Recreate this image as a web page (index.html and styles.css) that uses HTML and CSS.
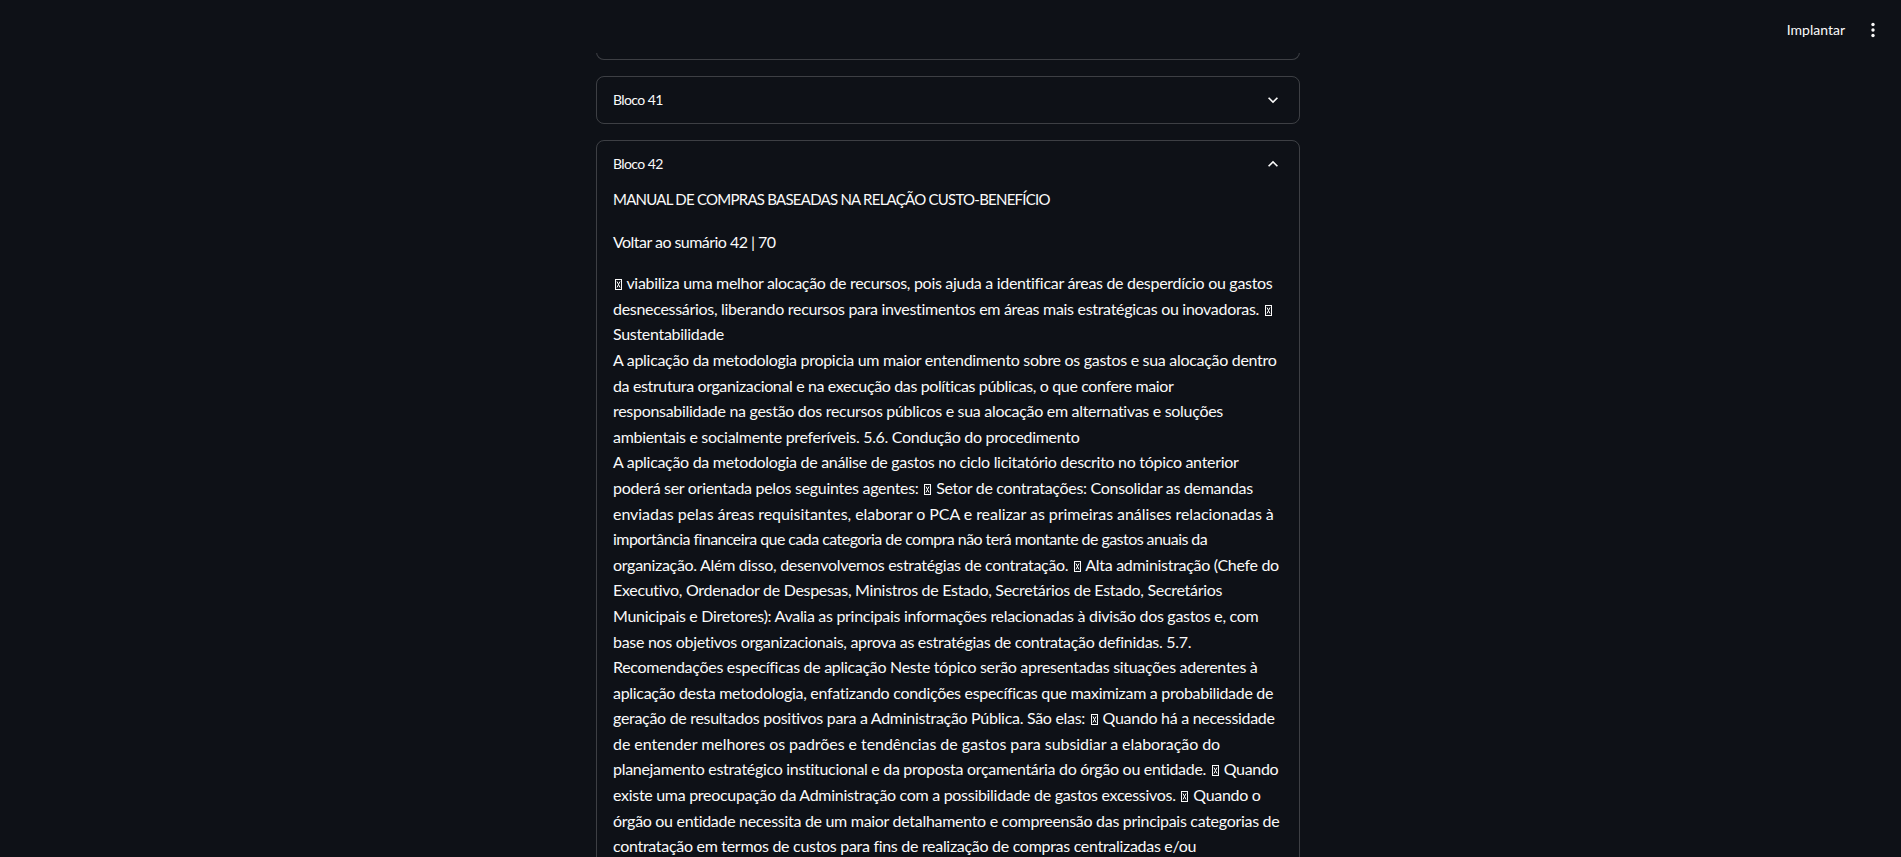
FILE: index.html
```html
<!DOCTYPE html>
<html lang="pt">
<head>
<meta charset="utf-8">
<title>Blocos</title>
<link rel="stylesheet" href="styles.css">
</head>
<body>
<header class="app-header">
  <div class="toolbar">
    <span class="deploy">Implantar</span>
    <span class="kebab" aria-label="menu">
      <svg width="16" height="16" viewBox="0 0 16 16"><circle cx="8" cy="2.5" r="1.7" fill="#fafafa"/><circle cx="8" cy="8" r="1.7" fill="#fafafa"/><circle cx="8" cy="13.5" r="1.7" fill="#fafafa"/></svg>
    </span>
  </div>
</header>
<main class="app-main">
  <div class="column">
    <div class="expander cut"></div>

    <div class="expander">
      <div class="summary">
        <span class="summary-label">Bloco 41</span>
        <svg class="chev" width="20" height="20" viewBox="0 0 24 24"><path d="M16.59 8.59L12 13.17 7.41 8.59 6 10l6 6 6-6z" fill="#fafafa"/></svg>
      </div>
    </div>

    <div class="expander open">
      <div class="summary">
        <span class="summary-label">Bloco 42</span>
        <svg class="chev" width="20" height="20" viewBox="0 0 24 24"><path d="M7.41 15.41L12 10.83l4.59 4.58L18 14l-6-6-6 6z" fill="#fafafa"/></svg>
      </div>
      <div class="details">
        <p class="line caps">MANUAL DE COMPRAS BASEADAS NA RELAÇÃO CUSTO-BENEFÍCIO</p>
        <p class="line back">Voltar ao sumário 42 | 70</p>
        <p class="body-text"><span><svg class="tofu" width="7" height="11" viewBox="0 0 7 11"><rect x="0.5" y="0.5" width="6" height="10" fill="none" stroke="#fafafa"/><path d="M2 2.5 L5 8.5 M5 2.5 L2 8.5" stroke="#fafafa" stroke-width="1"/></svg> viabiliza uma melhor alocação de recursos, pois ajuda a identificar áreas de desperdício ou gastos</span>
<span>desnecessários, liberando recursos para investimentos em áreas mais estratégicas ou inovadoras. <svg class="tofu" width="7" height="11" viewBox="0 0 7 11"><rect x="0.5" y="0.5" width="6" height="10" fill="none" stroke="#fafafa"/><path d="M2 2.5 L5 8.5 M5 2.5 L2 8.5" stroke="#fafafa" stroke-width="1"/></svg></span>
<span>Sustentabilidade</span>
<span>A aplicação da metodologia propicia um maior entendimento sobre os gastos e sua alocação dentro</span>
<span class="tight-1">da estrutura organizacional e na execução das políticas públicas, o que confere maior</span>
<span>responsabilidade na gestão dos recursos públicos e sua alocação em alternativas e soluções</span>
<span>ambientais e socialmente preferíveis. 5.6. Condução do procedimento</span>
<span>A aplicação da metodologia de análise de gastos no ciclo licitatório descrito no tópico anterior</span>
<span>poderá ser orientada pelos seguintes agentes: <svg class="tofu" width="7" height="11" viewBox="0 0 7 11"><rect x="0.5" y="0.5" width="6" height="10" fill="none" stroke="#fafafa"/><path d="M2 2.5 L5 8.5 M5 2.5 L2 8.5" stroke="#fafafa" stroke-width="1"/></svg> Setor de contratações: Consolidar as demandas</span>
<span class="loose">enviadas pelas áreas requisitantes, elaborar o PCA e realizar as primeiras análises relacionadas à</span>
<span class="tight-2">importância financeira que cada categoria de compra não terá montante de gastos anuais da</span>
<span>organização. Além disso, desenvolvemos estratégias de contratação. <svg class="tofu" width="7" height="11" viewBox="0 0 7 11"><rect x="0.5" y="0.5" width="6" height="10" fill="none" stroke="#fafafa"/><path d="M2 2.5 L5 8.5 M5 2.5 L2 8.5" stroke="#fafafa" stroke-width="1"/></svg> Alta administração (Chefe do</span>
<span>Executivo, Ordenador de Despesas, Ministros de Estado, Secretários de Estado, Secretários</span>
<span>Municipais e Diretores): Avalia as principais informações relacionadas à divisão dos gastos e, com</span>
<span>base nos objetivos organizacionais, aprova as estratégias de contratação definidas. 5.7.</span>
<span>Recomendações específicas de aplicação Neste tópico serão apresentadas situações aderentes à</span>
<span>aplicação desta metodologia, enfatizando condições específicas que maximizam a probabilidade de</span>
<span>geração de resultados positivos para a Administração Pública. São elas: <svg class="tofu" width="7" height="11" viewBox="0 0 7 11"><rect x="0.5" y="0.5" width="6" height="10" fill="none" stroke="#fafafa"/><path d="M2 2.5 L5 8.5 M5 2.5 L2 8.5" stroke="#fafafa" stroke-width="1"/></svg> Quando há a necessidade</span>
<span class="loose">de entender melhores os padrões e tendências de gastos para subsidiar a elaboração do</span>
<span>planejamento estratégico institucional e da proposta orçamentária do órgão ou entidade. <svg class="tofu" width="7" height="11" viewBox="0 0 7 11"><rect x="0.5" y="0.5" width="6" height="10" fill="none" stroke="#fafafa"/><path d="M2 2.5 L5 8.5 M5 2.5 L2 8.5" stroke="#fafafa" stroke-width="1"/></svg> Quando</span>
<span>existe uma preocupação da Administração com a possibilidade de gastos excessivos. <svg class="tofu" width="7" height="11" viewBox="0 0 7 11"><rect x="0.5" y="0.5" width="6" height="10" fill="none" stroke="#fafafa"/><path d="M2 2.5 L5 8.5 M5 2.5 L2 8.5" stroke="#fafafa" stroke-width="1"/></svg> Quando o</span>
<span>órgão ou entidade necessita de um maior detalhamento e compreensão das principais categorias de</span>
<span>contratação em termos de custos para fins de realização de compras centralizadas e/ou</span></p>
      </div>
    </div>
  </div>
</main>
</body>
</html>
```

FILE: styles.css
```css
* { box-sizing: border-box; }

html, body {
  margin: 0;
  padding: 0;
  background: #0e1117;
  color: #fafafa;
  font-family: Lato, "Liberation Sans", sans-serif;
  height: 100%;
  overflow: hidden;
}

.app-header {
  position: fixed;
  top: 0;
  left: 0;
  right: 0;
  height: 53px;
  background: #0e1117;
  z-index: 10;
}

.toolbar {
  position: absolute;
  right: 20px;
  top: 20px;
  display: flex;
  align-items: center;
  gap: 20px;
}

.deploy {
  font-size: 14px;
  line-height: 20px;
  color: #fafafa;
}

.kebab {
  display: flex;
  align-items: center;
}

.app-main {
  padding-right: 5px;
}

.column {
  width: 704px;
  margin: 0 auto;
  display: flex;
  flex-direction: column;
  gap: 16px;
}

.expander {
  border: 1px solid rgba(250, 250, 250, 0.2);
  border-radius: 8px;
}

.expander.cut {
  height: 60px;
  border-top: none;
  border-top-left-radius: 0;
  border-top-right-radius: 0;
}

.summary {
  display: flex;
  align-items: center;
  justify-content: space-between;
  height: 46px;
  padding: 0 16px;
}

.summary-label {
  font-size: 14px;
  line-height: 20px;
  letter-spacing: -0.6px;
}

.details {
  padding: 0 16px 16px;
}

.line {
  margin: 0 0 16px;
  font-size: 16px;
  line-height: 25.6px;
  white-space: nowrap;
}

.line.caps {
  font-size: 15px;
  letter-spacing: -0.75px;
}

.line.back {
  letter-spacing: -0.54px;
}

.body-text {
  margin: 0;
  font-size: 16px;
  line-height: 25.6px;
  letter-spacing: -0.3px;
}

.body-text span {
  display: block;
  white-space: nowrap;
}

.body-text .loose { letter-spacing: -0.05px; }
.body-text .tight-1 { letter-spacing: -0.37px; }
.body-text .tight-2 { letter-spacing: -0.55px; }

.tofu {
  margin: 0 1px 0 2px;
  vertical-align: -1px;
}
```
